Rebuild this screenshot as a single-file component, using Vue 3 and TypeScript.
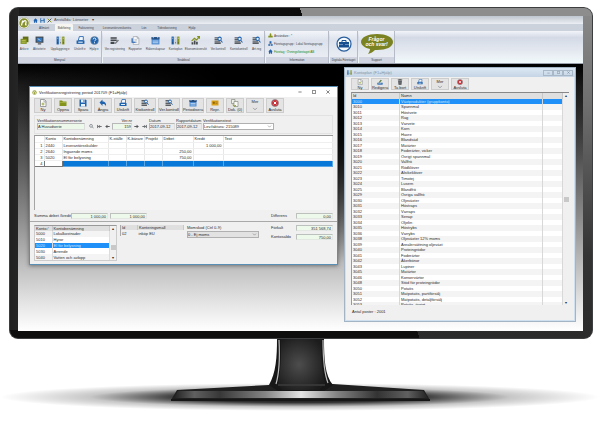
<script setup lang="ts">
import { h, ref } from 'vue'

type Shape = [d: string, fill: string, stroke?: string, width?: number]

const BLUE = '#1f62ad'
const DARK = '#45494d'
const OLIVE = '#84931c'

const icons: Record<string, Shape[]> = {
  archive: [['M5 1h10v10H5z', '#626d1a'], ['M1 5h11v9H1z', OLIVE], ['M3 8h7M3 11h7', 'none', '#d3db85', 1]],
  screen: [['M1 1h14v11H1z', DARK], ['M3 3h10v7H3z', '#2d78c8'], ['M5 5l5 3', 'none', '#fff', 1], ['M5 14h6', 'none', DARK, 2]],
  binders: [['M1 1h4v14H1z', BLUE], ['M6 1h4v14H6z', '#c5ccd3'], ['M11 1h4v14h-4z', OLIVE], ['M2 4h2M12 4h2M7 4h2', 'none', '#fff', 1], ['M3 11v2M8 11v2M13 11v2', 'none', '#333', 1]],
  print: [['M6 1h7v7H4z', '#f4f8fd', BLUE, 1.5], ['M1 8h14v6H1z', BLUE], ['M4 10h8v2H4z', '#e6eef6']],
  help: [['M15 8A7 7 0 1 1 1 8a7 7 0 0 1 14 0z', BLUE, '#82909c', 1], ['M5.5 6c0-3.500 5-3 5 0c0 2-2.500 1.500-2.500 3.500M8 11v2', 'none', '#fff', 1.6]],
  entry: [['M1 2h11v3H1zM1 6h11v3H1zM1 10h7v4H1z', DARK], ['M8 13l6-7 2 2-6 6z', '#797d80']],
  report: [['M4 1h7l3 3v11H4z', '#f5f7fa', '#8c939b', 1], ['M11 1v3h3M6 7h5M6 11h5', 'none', '#7b8792', 1], ['M2 4v7h6', 'none', BLUE, 2]],
  calendar: [['M1 2h14v13H1z', '#4d8bd0'], ['M1 2h14v4H1z', '#244d80'], ['M4 1v3M12 1v3M3 9h10M3 12h10', 'none', '#e0edfb', 1.3]],
  chart: [['M1 11h3v4H1zM5 8h3v7H5zM9 10h3v5H9z', DARK], ['M1 9l5-5 4 3 5-6M11 1h4v4', 'none', OLIVE, 2]],
  inspect: [['M1 2h10v2H1zM1 5h10v2H1zM1 8h10v2H1zM1 11h11v3H1z', '#5b5f63'], ['M13 5a3 3 0 1 1-6 0a3 3 0 0 1 6 0zM12 7.500l3 4', '#e4effa', BLUE, 1.8]],
  people: [['M8 1a3 3 0 0 1 2 5l1 3h4v5H1V9h4l1-3a3 3 0 0 1 2-5z', OLIVE]],
  group: [['M5 1h6v6H5zM1 10h6v5H1zM9 10h6v5H9z', BLUE], ['M8 7v3M4 10V8h8v2', 'none', DARK, 1]],
  home: [['M8 1l7 7h-2v7H9v-4H7v4H3V8H1z', BLUE]],
  save: [['M1 1h12l2 2v12H1z', BLUE], ['M4 1h8v6H4zM4 10h8v5H4z', '#eaf2fa'], ['M9 2h2v4H9z', BLUE]],
  tools: [['M2 2l12 12', 'none', OLIVE, 3], ['M14 2L2 14', 'none', '#435067', 3]],
  fresh: [['M3 1h8l3 3v11H3z', '#fbfbf8', '#6d7378', 1.3], ['M10 2v4h4', 'none', '#6d7378', 1], ['M8 7v6M5 10h6', 'none', OLIVE, 1.4]],
  folder: [['M1 3h5l2 2h7v9H1z', OLIVE], ['M2 7h12', 'none', '#a9b549', 1.5]],
  undo: [['M7 1v4c5 0 8 3 7 10c-1-4-3-5-7-5v4L1 7z', BLUE]],
  coupon: [['M1 3h14v10H1z', '#dba018'], ['M4 6h3v3H4zM9 6h4M9 9h4', '#8b6509', '#8b6509', 1]],
  files: [['M1 1h7v8H1z', '#edf0e7', '#737c72', 1.2], ['M6 5h8v10H6z', '#f8f9f2', '#737c72', 1.2], ['M4 11c0 3 3 4 6 2', 'none', OLIVE, 2]],
  close: [['M15 8A7 7 0 1 1 1 8a7 7 0 0 1 14 0z', '#cf3038', '#868c92', 1.5], ['M5.500 5.500l5 5M10.500 5.500l-5 5', 'none', '#fff', 2]],
  edit: [['M1 10h14v5H1z', BLUE], ['M4 9l6-7 3 2-6 6z', '#5a7c40'], ['M3 12h9', 'none', '#fff', 1]],
  trash: [['M3 4h10l-1 11H4z', DARK], ['M2 2h12M6 1h4', 'none', DARK, 2], ['M6 6v7M10 6v7', 'none', '#b8bcc0', 1]],
  down: [['M3 5l5 5 5-5', 'none', '#777b80', 1.8]],
  find: [['M11 6a4.500 4.500 0 1 1-9 0a4.500 4.500 0 0 1 9 0zM10 9l5 5', '#eef3f7', '#60656a', 2]],
  first: [['M2 3v10M15 8H5M9 4L5 8l4 4', 'none', '#44484c', 2.4]],
  prev: [['M15 8H3M8 3L3 8l5 5', 'none', '#44484c', 2.8]],
  next: [['M1 8h12M8 3l5 5-5 5', 'none', '#44484c', 2.8]],
  last: [['M14 3v10M1 8h10M7 4l4 4-4 4', 'none', '#44484c', 2.4]],
}

const Icon = (props: { name: string }) =>
  h('svg', { viewBox: '0 0 16 16', 'aria-hidden': 'true' },
    icons[props.name].map(([d, fill, stroke, width]) =>
      h('path', { d, fill, stroke: stroke ?? 'none', 'stroke-width': width ?? 0 })))
Icon.props = ['name']

const tabs = [
  ['Allmänt', 'w-m'], ['Bokföring', 'w-m'], ['Fakturering', 'w-l'], ['Leverantörsreskontra', 'w-xl'],
  ['Lön', 'w-s'], ['Tidredovisning', 'w-l2'], ['Hjälp', 'w-m'],
]
const activeTab = ref('Bokföring')

const menuItems = [
  ['archive', 'Arkiv ▾', 'n12'], ['screen', 'Aktivitet ▾', 'n16'], ['binders', 'Uppläggning ▾', 'n23'],
  ['print', 'Utskrift ▾', 'n14'], ['help', 'Hjälp ▾', 'n12'],
]
const quickItems = [
  ['entry', 'Ver.registrering', 'n23'], ['report', 'Rapporter', 'n16'], ['calendar', 'Räkenskapsår', 'n23'],
  ['binders', 'Kontoplan', 'n16'], ['chart', 'Ekonomiöversikt', 'n23'], ['inspect', 'Ver.kontroll', 'n20'],
  ['inspect', 'Kontokontroll', 'n20'], ['inspect', 'Art.reg', 'n14'],
]
const entryTools = [
  ['fresh', 'Ny'], ['folder', 'Öppna'], ['save', 'Spara'], ['undo', 'Ångra'], ['print', 'Utskrift'],
  ['inspect', 'Ktokontroll', 'wide'], ['inspect', 'Ver.kontroll', 'wide'], ['calendar', 'Periodisera', 'wide'],
  ['coupon', 'Repr.'], ['files', 'Dok. (0)'], ['more', 'Mer'], ['close', 'Avsluta'],
]
const planTools = [
  ['fresh', 'Ny'], ['edit', 'Redigera'], ['trash', 'Ta bort'], ['print', 'Utskrift'], ['more', 'Mer'], ['close', 'Avsluta'],
]

const entryHead = ['', 'Konto', 'Kontobenämning', 'K-ställe', 'K-bärare', 'Projekt', 'Debet', 'Kredit', 'Text']
const entryRows = [
  ['1', '2440', 'Leverantörsskulder', '', '', '', '', '1 000,00', ''],
  ['2', '2640', 'Ingående moms', '', '', '', '250,00', '', ''],
  ['3', '5020', 'El för belysning', '', '', '', '750,00', '', ''],
  ['4', '', '', '', '', '', '', '', ''],
]
const accountRows = [
  ['5000', 'Lokalkostnader'], ['5010', 'Hyror'], ['5020', 'El för belysning'], ['5030', 'Arrende'], ['5040', 'Vatten och avlopp'],
]

const planRows = `3000 Växtprodukter (gruppkonto)|3010 Spannmål|3011 Höstvete|3012 Råg|3013 Vårvete|3014 Korn|3015 Havre|3016 Blandsäd|3017 Matärter|3018 Foderärter, vicker|3019 Övrigt spannmål|3020 Vallfrö|3021 Rödklöver|3022 Alsikeklöver|3023 Timotej|3024 Lusern|3025 Blandfrö|3029 Övriga vallfrö|3030 Oljeväxter|3031 Höstraps|3032 Vårraps|3033 Senap|3034 Oljelin|3035 Höstrybs|3036 Vårrybs|3038 Oljeväxter 12% moms|3039 Arealersättning oljeväxt|3040 Proteingrödor|3041 Foderärtor|3042 Åkerbönor|3043 Lupiner|3045 Matärtor|3046 Konservärtor|3048 Stöd för proteingrödor|3050 Potatis|3051 Matpotatis, partiförsälj|3052 Matpotatis, detaljförsälj|3053 Potatis, övrigt`
  .split('|').map((r) => [r.slice(0, 4), r.slice(5)])

const voucherSeries = ref('A Huvudserie')
const voucherNo = ref('159')
const voucherDate = ref('2017-09-12')
const reportDate = ref('2017-09-12')
</script>

<template>
  <main class="stage">
    <div class="monitor">
      <div class="screen">
        <header class="ribbon">
          <div class="quick">
            <Icon name="home" class="ico-xs" /><Icon name="save" class="ico-xs" /><Icon name="tools" class="ico-xs" />
            <span>Anställda: Lönseter</span><span class="quick-more">▾</span>
          </div>
          <nav class="tabs">
            <button v-for="[t, w] in tabs" :key="t" :class="['tab', w, { active: t === activeTab }]" @click="activeTab = t">{{ t }}</button>
          </nav>
          <svg class="logo" viewBox="0 0 24 24" aria-hidden="true">
            <circle cx="12" cy="12" r="11.500" fill="#f3f4ee" stroke="#a3a996" />
            <circle cx="12" cy="12" r="9.500" fill="#87922f" />
            <path d="M7 17l2-9c1 0 2 0 2 1c3-3 6-2 5 2l-1 4c0 1 1 1 2 0" fill="none" stroke="#fff" stroke-width="2.400" />
          </svg>
          <div class="groups">
            <section class="group g-menu">
              <div class="items">
                <button v-for="[i, l, w] in menuItems" :key="l" :class="['item', w]"><Icon :name="i" class="ico-m" /><span>{{ l }}</span></button>
              </div>
              <h2>Menyval</h2>
            </section>
            <section class="group g-quick">
              <div class="items">
                <button v-for="[i, l, w] in quickItems" :key="l" :class="['item', w]"><Icon :name="i" class="ico-m" /><span>{{ l }}</span></button>
              </div>
              <h2>Snabbval</h2>
            </section>
            <section class="group g-info">
              <ul class="info">
                <li><Icon name="people" class="ico-xs" />Användare : *</li>
                <li><Icon name="group" class="ico-xs" />Företagsgrupp : Lokal företagsgrupp</li>
                <li class="green"><Icon name="home" class="ico-xs" />Företag : Övningsföretaget AB</li>
              </ul>
              <h2>Information</h2>
            </section>
            <section class="group g-digital">
              <button class="badge" aria-label="Digitala Företaget">
                <svg viewBox="0 0 32 32" aria-hidden="true">
                  <circle cx="16" cy="16" r="14" fill="#f7fafc" stroke="#2a5f9e" stroke-width="2.500" />
                  <path d="M12 12V9h8v3" fill="none" stroke="#174f91" stroke-width="2" />
                  <path d="M6 12h20v11H6z" fill="#174f91" />
                  <path d="M6 17h8M18 17h8" stroke="#b6cde5" />
                </svg>
              </button>
              <h2>Digitala Företaget</h2>
            </section>
            <section class="group g-support">
              <button class="bubble">
                <svg viewBox="0 0 34 22" aria-hidden="true">
                  <path d="M17 1c9 0 16 3 16 8s-7 8-16 8h-2c-2 2-4 3-7 4c1-2 2-3 2-5C5 15 1 12 1 9c0-5 7-8 16-8z" fill="#7b8221" />
                </svg>
                <span>Frågor<br />och svar!</span>
              </button>
              <h2>Support</h2>
            </section>
          </div>
        </header>

        <div class="desktop">
          <section class="window entry">
            <header class="titlebar">
              <svg class="ico-xs" viewBox="0 0 16 16" aria-hidden="true"><circle cx="8" cy="8" r="7" fill="#98a23a" /><path d="M5 12V6c3-2 6-1 6 2v4" fill="none" stroke="#fff" stroke-width="2" /></svg>
              <h1>Verifikationsregistrering period 201709 (F1=Hjälp)</h1>
              <div class="caption">
                <button aria-label="Minimera"><svg viewBox="0 0 10 10"><path d="M1 5h8" /></svg></button>
                <button aria-label="Maximera"><svg viewBox="0 0 10 10"><path d="M1 1h8v8H1z" /></svg></button>
                <button aria-label="Stäng"><svg viewBox="0 0 10 10"><path d="M1 1l8 8M9 1L1 9" /></svg></button>
              </div>
            </header>
            <div class="toolbar">
              <button v-for="[i, l, w] in entryTools" :key="l" :class="['tool', w, { more: i === 'more' }]">
                <Icon v-if="i !== 'more'" :name="i" class="ico-m" /><span>{{ l }}</span><Icon v-if="i === 'more'" name="down" class="ico-s" />
              </button>
            </div>
            <form class="fields" @submit.prevent>
              <label class="f-series">Verifikationsnummerserie<input v-model="voucherSeries" class="green-in" /></label>
              <button class="step box" aria-label="Sök"><Icon name="find" class="ico-xs" /></button>
              <button class="step" aria-label="Första"><Icon name="first" class="ico-xs" /></button>
              <button class="step" aria-label="Föregående"><Icon name="prev" class="ico-xs" /></button>
              <label class="f-no">Ver.nr<input v-model="voucherNo" class="green-in" /></label>
              <button class="step" aria-label="Nästa"><Icon name="next" class="ico-xs" /></button>
              <button class="step" aria-label="Sista"><Icon name="last" class="ico-xs" /></button>
              <label class="f-date">Datum<input v-model="voucherDate" /></label>
              <label class="f-date">Rapportdatum<input v-model="reportDate" /></label>
              <label class="f-text">Verifikationstext
                <span class="pick"><select><option>Lev.faktura: 215089</option></select><Icon name="down" class="ico-xs" /></span>
              </label>
            </form>
            <div class="sheet">
              <table>
                <colgroup><col v-for="n in 9" :key="n" :class="'c' + n" /></colgroup>
                <thead><tr><th v-for="t in entryHead" :key="t">{{ t }}</th></tr></thead>
                <tbody>
                  <tr v-for="(row, r) in entryRows" :key="r" :class="{ current: r === 3 }">
                    <td v-for="(cell, c) in row" :key="c" :class="{ num: c === 0 || c === 6 || c === 7 }">{{ cell }}</td>
                  </tr>
                </tbody>
              </table>
            </div>
            <div class="sums">
              <span class="sum-label">Summa debet /kredit</span>
              <output>1 000,00</output><output>1 000,00</output>
              <span class="diff">Differens</span><output>0,00</output>
            </div>
            <div class="lower">
              <div class="accounts">
                <table>
                  <thead><tr><th>Konto ⁄</th><th>Kontobenämning</th></tr></thead>
                  <tbody>
                    <tr v-for="[id, name] in accountRows" :key="id" :class="{ picked: id === '5020' }"><td>{{ id }}</td><td>{{ name }}</td></tr>
                  </tbody>
                </table>
                <div class="bar"><span>▴</span><i class="thumb low"></i><span>▾</span></div>
              </div>
              <table class="templates">
                <thead><tr><th>Id</th><th>Konteringsmall</th></tr></thead>
                <tbody><tr><td>02</td><td>inköp EU</td></tr></tbody>
              </table>
              <label class="vat">Momskod (Ctrl 0-9)
                <span class="pick grey"><select><option>0 - Ej moms</option></select><Icon name="down" class="ico-xs" /></span>
              </label>
              <div class="totals">
                <span>Förkalt</span><output>351 568,74</output>
                <span>Kontosaldo</span><output>750,00</output>
              </div>
            </div>
          </section>

          <section class="window plan">
            <header class="titlebar">
              <Icon name="binders" class="ico-xs" />
              <h1>Kontoplan (F1=Hjälp)</h1>
              <div class="caption">
                <button aria-label="Minimera"><svg viewBox="0 0 10 10"><path d="M1 7h8" /></svg></button>
                <button aria-label="Maximera"><svg viewBox="0 0 10 10"><path d="M1 1h8v8H1z" /></svg></button>
                <button aria-label="Stäng"><svg viewBox="0 0 10 10"><path d="M1 1l8 8M9 1L1 9" /></svg></button>
              </div>
            </header>
            <div class="toolbar">
              <button v-for="[i, l] in planTools" :key="l" :class="['tool', { more: i === 'more' }]">
                <Icon v-if="i !== 'more'" :name="i" class="ico-s" /><span>{{ l }}</span><Icon v-if="i === 'more'" name="down" class="ico-s" />
              </button>
            </div>
            <div class="plan-list">
              <table>
                <thead><tr><th>Id</th><th>Namn</th><th></th></tr></thead>
                <tbody>
                  <tr v-for="([id, name], n) in planRows" :key="id" :class="{ picked: n === 0 }"><td>{{ id }}</td><td>{{ name }}</td><td></td></tr>
                </tbody>
              </table>
              <div class="bar"><span>▴</span><i class="thumb"></i><span>▾</span></div>
            </div>
            <footer>Antal poster : 2001</footer>
          </section>
        </div>
      </div>
    </div>

    <svg class="stand" viewBox="0 0 600 83" aria-hidden="true">
      <defs>
        <radialGradient id="shade"><stop offset="0" stop-color="#000" stop-opacity="1" /><stop offset=".4" stop-color="#000" stop-opacity=".8" /><stop offset=".7" stop-color="#000" stop-opacity=".22" /><stop offset="1" stop-color="#000" stop-opacity="0" /></radialGradient>
        <linearGradient id="plate"><stop offset="0" stop-color="#222" /><stop offset=".08" stop-color="#606060" /><stop offset=".18" stop-color="#383838" /><stop offset=".36" stop-color="#858585" /><stop offset=".5" stop-color="#e4e4e4" /><stop offset=".64" stop-color="#858585" /><stop offset=".8" stop-color="#333" /><stop offset=".92" stop-color="#606060" /><stop offset="1" stop-color="#222" /></linearGradient>
        <radialGradient id="neck" cx=".45" cy=".5" r=".6"><stop offset="0" stop-color="#4d4d4d" /><stop offset="1" stop-color="#1c1c1c" /></radialGradient>
      </defs>
      <ellipse cx="300" cy="58" rx="300" ry="14" fill="url(#shade)" />
      <path d="M177 51L269 46L333 45L424 51L430 61H171z" fill="#202020" />
      <path d="M178 52H423L428 59H174z" fill="url(#plate)" />
      <path d="M171 60H430V62H171z" fill="#171717" />
      <path d="M277 0H324C324 20 325 37 333 46L324 52H278L269 46C276 34 277 18 277 0z" fill="#171717" />
      <path d="M281 0H321C321 18 322 33 325 44L319 51H282L278 45C281 32 281 18 281 0z" fill="url(#neck)" />
      <path d="M279 1C280 20 279 35 276 45M323 1C323 20 324 34 328 44" fill="none" stroke="#bdbdbd" stroke-width="1.200" />
      <path d="M278 46H325" stroke="#3c3c3c" stroke-width="1.500" />
    </svg>
  </main>
</template>

<style>
body { margin: 0; background: #fff; }
</style>

<style scoped>
* { box-sizing: border-box; }
.stage {
  display: flex; flex-direction: column; height: 100vh; min-height: 380px;
  font: 4px/5px "Liberation Sans", Arial, sans-serif; color: #2b2b2b;
}
button, input, select { font: inherit; color: inherit; margin: 0; padding: 0; border: 0; background: none; border-radius: 0; min-width: 0; }
h1, h2 { font: inherit; margin: 0; }
table { border-collapse: collapse; border-spacing: 0; }
th, td { padding: 0 1px; font-weight: normal; text-align: left; overflow: hidden; white-space: nowrap; }
.stage span, .stage label, .stage button, .stage li { white-space: nowrap; }

.monitor {
  position: relative; flex: 1; min-height: 0; display: flex; margin: 7px 7px 0 9px; padding: 9px 10px 8px 9px;
  border-radius: 9px; box-shadow: inset 0 0 0 1px #3c3e40;
  background:
    linear-gradient(75deg, #0e0e0e 0 70%, transparent 70%) bottom / 100% 9px no-repeat,
    linear-gradient(to right, #202020, #262626) left / 10px 100% no-repeat,
    linear-gradient(75deg, #1c1c1c 0, #0c0c0c 50%, #8d8d8d 50%) top / 100% 9px no-repeat,
    linear-gradient(#8a8a8a, #6e6e6e 30%, #333 75%, #2b2b2b);
}
.screen { flex: 1; display: flex; flex-direction: column; min-width: 0; }

.ribbon { position: relative; height: 48px; background: #cfd5df; border-bottom: 1px solid #9ba2ad; color: #3d444e; font-size: 3px; line-height: 4px; }
.quick { height: 8px; display: flex; align-items: center; gap: 2px; padding-left: 15px; background: linear-gradient(#c0c6cf, #eceff4); font-size: 4px; }
.quick-more { padding-left: 2px; }
.tabs { height: 7px; display: flex; padding-left: 17px; gap: 2px; background: #ccd2dc; }
.tab { text-align: center; }
.tab.active { background: #f6f5ef; border-radius: 1px 1px 0 0; }
.w-s { width: 14px; } .w-m { width: 18px; } .w-l { width: 22px; } .w-l2 { width: 28px; } .w-xl { width: 36px; }
.logo { position: absolute; left: 0; top: 1px; width: 12px; height: 12px; }
.groups { height: 32px; display: flex; gap: 1px; background: linear-gradient(#f2f4f9, #d4dae6 20%, #e5eaf1 65%, #f2fafb); }
.group { display: flex; flex-direction: column; border-right: 1px solid #b6bcc7; background: linear-gradient(#f3f5fa, #dce1eb 30%, #eef1f6); }
.group h2 { height: 6px; line-height: 6px; text-align: center; white-space: nowrap; background: #d0d5e1; }
.g-menu { width: 84px; } .g-quick { width: 162px; } .g-info { width: 63px; } .g-digital { width: 28px; } .g-support { width: 36px; }
.items { flex: 1; display: flex; justify-content: space-around; padding-top: 5px; }
.item { display: flex; flex-direction: column; align-items: center; gap: 2px; }
.n12 { width: 12px; } .n14 { width: 14px; } .n16 { width: 16px; } .n20 { width: 20px; } .n23 { width: 23px; }
.ico-xs { width: 5px; height: 5px; flex: none; }
.ico-s { width: 6px; height: 6px; flex: none; }
.ico-m { width: 8px; height: 8px; flex: none; }
.item .ico-m { width: 9px; height: 9px; }
.info { flex: 1; list-style: none; margin: 0; padding: 2px 1px 0 2px; display: flex; flex-direction: column; gap: 3px; }
.info li { display: flex; align-items: center; gap: 1px; height: 5px; }
.green { color: #0c8a22; }
.badge, .bubble { flex: 1; display: grid; place-items: center; }
.badge svg { width: 16px; height: 16px; }
.bubble svg { width: 34px; height: 22px; grid-area: 1 / 1; }
.bubble span { grid-area: 1 / 1; font: italic bold 5px/5px "Liberation Sans", Arial, sans-serif; color: #fff; padding-bottom: 4px; }

.desktop {
  position: relative; flex: 1; min-height: 0; overflow: hidden;
  background:
    radial-gradient(ellipse 55% 75% at 52% 0, #000 0 30%, transparent 100%),
    linear-gradient(#000 0, #1d1d1d 8%, #555 36%, #8d8d8d 58%, #c2c2c2 77%, #e0e0e0 88%, #fff);
}
.window { position: absolute; display: flex; flex-direction: column; background: #f0f0f0; }
.entry { left: 11px; top: 22px; width: 309px; height: 179px; border: 1px solid #5a8fb5; box-shadow: 0 1px 4px #0006; }
.plan { right: 7px; top: 3px; width: 232px; height: 255px; border: 1px solid #a3b4c4; box-shadow: inset 0 0 0 1px #cfe0f0; padding: 0 6px; }
.titlebar { display: flex; align-items: center; gap: 2px; }
.entry .titlebar { flex: none; height: 10px; padding: 0 2px; background: #fff; }
.plan .titlebar { flex: none; height: 9px; margin: 0 -6px; padding: 0 2px; background: linear-gradient(#dbe7f3, #c5d5e6); color: #8494a4; }
.caption { margin-left: auto; display: flex; }
.caption button { display: grid; place-items: center; }
.caption svg { width: 4px; height: 4px; fill: none; stroke: #333; stroke-width: 1.5; }
.entry .caption button { width: 14px; }
.plan .caption button { width: 10px; height: 6px; border: 1px solid #a9b8c8; }
.plan .caption svg { width: 3px; height: 3px; stroke: #66788a; }

.toolbar { flex: none; display: flex; gap: 2px; }
.entry .toolbar { height: 17px; padding: 1px 4px; }
.plan .toolbar { height: 15px; padding: 1px 0 2px; }
.tool { width: 18px; display: flex; flex-direction: column; align-items: center; justify-content: center; border: 1px solid #cdcdcd; background: #e4e4e4; line-height: 5px; }
.tool.wide { width: 22px; }
.tool.more { justify-content: space-between; }

.fields { flex: none; height: 19px; margin: 1px 4px; padding: 2px 2px 3px; display: flex; align-items: flex-end; gap: 1px; border: 1px solid #e2e2e2; }
.fields label, .vat { display: flex; flex-direction: column; }
.fields input { width: 100%; height: 7px; background: #ececec; border: 1px solid #b8b8b8; border-right-color: #ddd; border-bottom-color: #ddd; }
.fields .green-in { background: #ecf9ea; }
.f-series { width: 48px; }
.f-no { width: 20px; text-align: right; }
.f-no input { text-align: right; }
.f-date { width: 26px; }
.f-text { width: 71px; }
.pick { display: flex; align-items: center; height: 7px; border: 1px solid #b0b0b0; background: #fff; padding-right: 1px; }
.pick select { flex: 1; height: 5px; appearance: none; }
.pick.grey { background: #e2e2e2; }
.step { width: 7px; height: 7px; display: grid; place-items: center; }
.step.box { margin-left: 2px; }

.sheet { flex: 1; min-height: 0; margin: 0 4px; border-left: 1px solid #a5a5a5; border-top: 1px solid #999; background: #f4f4f4; }
.sheet table { width: 100%; table-layout: fixed; background: #fff; }
.sheet tr { height: 6px; }
.sheet th, .sheet td { border-right: 1px solid #e7e7e7; border-bottom: 1px solid #efefef; line-height: 5px; }
.c1 { width: 9px; } .c2 { width: 18px; } .c3 { width: 46px; } .c4, .c5, .c6 { width: 18px; } .c7 { width: 31px; } .c8 { width: 30px; }
.sheet .num { text-align: right; }
.current td { background: #0878d8; border-color: #5aa5e4; }
.current td:nth-child(-n+2) { background: #fff; border-color: #777; }

output { background: #edfaeb; border: 1px solid #bdc1bd; border-right-color: #e3e8e3; border-bottom-color: #e3e8e3; text-align: right; height: 6px; line-height: 5px; padding-right: 1px; }
.sums { flex: none; height: 11px; padding: 0 4px; display: flex; align-items: center; gap: 2px; }
.sum-label { width: 35px; }
.sums output { width: 37px; }
.sums .diff { margin-left: auto; width: 23px; }
.lower { flex: none; height: 43px; padding: 3px 4px 0; display: flex; gap: 3px; border-top: 1px solid #a9a9a9; }
.accounts { width: 83px; height: 36px; display: flex; background: #fff; border: 1px solid #ccc; border-top-color: #999; }
.accounts table { flex: 1; table-layout: fixed; }
.accounts th:first-child { width: 17px; }
.accounts tbody tr:nth-child(odd) { background: #f4f4f4; }
.lower th, .plan th { background: #dfdfdf; border-right: 1px solid #c8c8c8; line-height: 5px; }
.lower td { line-height: 5px; border-right: 1px solid #ddd; }
.stage .window tbody tr.picked { background: #1e90f7; color: #cfe6ff; }
.bar { width: 6px; display: flex; flex-direction: column; align-items: center; justify-content: space-between; background: #f0f0f0; }
.thumb { width: 5px; height: 5px; background: #c8c8c8; }
.thumb.low { margin-top: 9px; }
.templates { width: 64px; height: 11px; table-layout: fixed; border-left: 1px solid #aaa; }
.templates th:first-child { width: 17px; }
.templates td { border: 0; }
.vat { width: 72px; height: 13px; gap: 1px; }
.totals { margin-left: auto; display: grid; grid-template-columns: 25px 37px; grid-auto-rows: 6px; row-gap: 3px; }

.plan-list { flex: 1; min-height: 0; display: flex; border-top: 1px solid #888; border-left: 1px solid #999; }
.plan table { flex: 1; display: flex; flex-direction: column; min-width: 0; }
.plan thead { flex: none; height: 6px; }
.plan tbody { flex: 1; min-height: 0; display: grid; grid-template-rows: repeat(37, minmax(0, 2fr)) minmax(0, 1fr); background: #fff; }
.plan tr { display: grid; grid-template-columns: 48px 1fr 20px; min-height: 0; overflow: hidden; }
.plan th { height: 6px; }
.plan td { line-height: 5px; border-right: 1px solid #d8d8d8; }
.plan tbody tr:nth-child(even) { background: #f4f4f4; }
.plan footer { flex: none; height: 16px; padding: 4px 1px; }

.stand { flex: none; display: block; width: 100%; height: 83px; }
</style>
